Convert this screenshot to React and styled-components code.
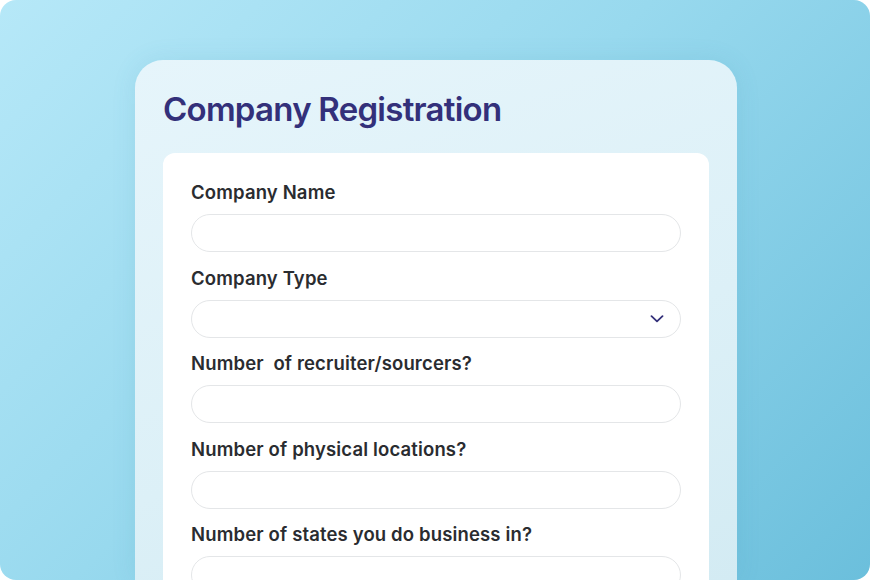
import React from "react";
import styled, { createGlobalStyle } from "styled-components";

const Global = createGlobalStyle`
  html, body { margin: 0; padding: 0; background: #ffffff; }
  * { box-sizing: border-box; }
`;

const Frame = styled.div`
  width: 870px;
  height: 580px;
  border-radius: 16px;
  overflow: hidden;
  background: linear-gradient(135deg, #b6e8f8 0%, #98d9ee 45%, #6bbfdc 100%);
  padding: 60px 0 0 135px;
  font-family: Inter, "Open Sans", sans-serif;
`;

const Card = styled.div`
  width: 602px;
  height: 520px;
  border-radius: 28px 28px 0 0;
  background: linear-gradient(160deg, #e6f5fb 0%, #dcf0f7 60%, #d3ebf3 100%);
  padding: 29px 28px 0 28px;
  display: flex;
  flex-direction: column;
  box-shadow: 0 0 24px rgba(60, 140, 170, 0.12);
`;

const Title = styled.h1`
  margin: 0;
  font-size: 33px;
  line-height: 40px;
  font-weight: 600;
  color: #33307a;
  letter-spacing: -0.75px;
`;

const Panel = styled.div`
  margin-top: 24px;
  flex: 1;
  background: #ffffff;
  border-radius: 12px 12px 0 0;
  padding: 28px 28px 0 28px;
  display: flex;
  flex-direction: column;
  gap: 14.6px;
`;

const Field = styled.div`
  display: flex;
  flex-direction: column;
  gap: 11px;
`;

const Label = styled.label`
  font-size: 18.5px;
  line-height: 22px;
  font-weight: 600;
  color: #2a2c30;
  letter-spacing: 0.15px;
  white-space: pre;
`;

const InputBox = styled.div`
  position: relative;
  height: 38px;
  border: 1px solid #e4e6e8;
  border-radius: 19px;
  background: #ffffff;
`;

const Chevron = styled.svg`
  position: absolute;
  right: 16px;
  top: 50%;
  transform: translateY(-50%);
`;

const fields = [
  { label: "Company Name" },
  { label: "Company Type", select: true },
  { label: "Number  of recruiter/sourcers?" },
  { label: "Number of physical locations?" },
  { label: "Number of states you do business in?" },
];

export default function App() {
  return (
    <>
      <Global />
      <Frame>
        <Card>
          <Title>Company Registration</Title>
          <Panel>
            {fields.map((f) => (
              <Field key={f.label}>
                <Label>{f.label}</Label>
                <InputBox>
                  {f.select && (
                    <Chevron width="14" height="8" viewBox="0 0 14 8" fill="none">
                      <path d="M1.5 1.2 L7 6.4 L12.5 1.2" stroke="#33307a" strokeWidth="1.8" strokeLinecap="round" strokeLinejoin="round" />
                    </Chevron>
                  )}
                </InputBox>
              </Field>
            ))}
          </Panel>
        </Card>
      </Frame>
    </>
  );
}
